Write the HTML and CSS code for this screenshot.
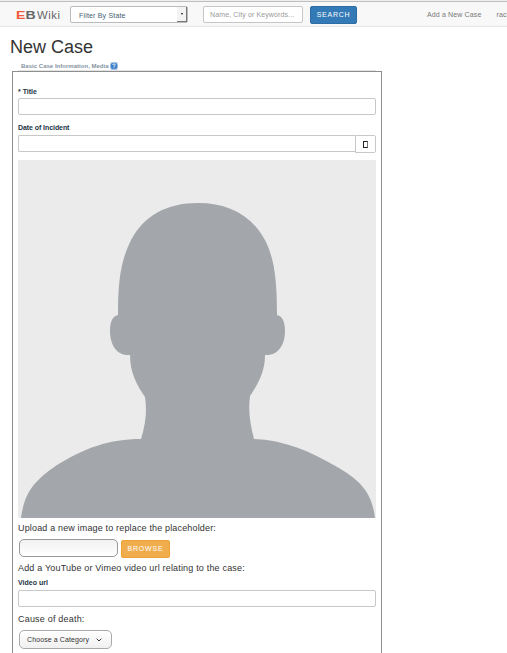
FILE: index.html
```html
<!DOCTYPE html>
<html lang="en">
<head>
<meta charset="utf-8">
<title>New Case - EBWiki</title>
<link rel="stylesheet" href="styles.css">
</head>
<body>
<nav class="navbar">
  <a class="brand"><b><span class="brand-e">E</span>B</b><span class="brand-wiki">Wiki</span></a>
  <div class="state-select"><span class="t-state">Filter By State</span><span class="select-arrow"></span></div>
  <div class="search-input"><span class="t-search">Name, City or Keywords...</span></div>
  <a class="btn btn-primary">SEARCH</a>
  <a class="nav-link">Add a New Case</a>
  <a class="nav-link nav-user">rachel</a>
</nav>
<main>
  <h1>New Case</h1>
  <div class="legend"><span class="t-legend">Basic Case Information, Media</span>
    <svg class="help" viewBox="0 0 8 8"><rect width="8" height="8" rx="2" fill="#b5cce4"/><circle cx="4" cy="4" r="3.3" fill="#3d80cb"/><path d="M2.7 3C2.8 1.5 5.3 1.6 5.2 3C5.1 3.8 4 3.7 4 4.8M4 5.5V6.3" fill="none" stroke="#fff" stroke-width="1"/></svg>
  </div>
  <form class="panel">
    <label class="label-title">* Title</label>
    <div class="field"></div>
    <label class="label-date">Date of Incident</label>
    <div class="date-group"><div class="field"></div><div class="date-button"><span class="glyph"></span></div></div>
    <svg class="avatar" viewBox="0 0 358 358">
      <rect width="358" height="358" fill="#ebebeb"/>
      <path d="M180 43C211 43 235 56 248 82C257 101 259 123 259 155C265 156 267 163 267 171C267 185 260 196 247 195C247 212 240 224 232 236C230 250 232 264 236 279C266 280 292 291 321 308C346 323 354 335 357 358H3C6 337 12 323 39 305C67 288 91 279 123 279C128 263 129 250 127 237C119 225 112 213 112 195C98 196 92 184 92 171C92 163 94 156 100 155C100 124 102 102 113 80C126 56 148 43 180 43Z" fill="#a3a6ab"/>
    </svg>
    <p class="copy copy-upload">Upload a new image to replace the placeholder:</p>
    <div class="upload-row"><div class="file-field"></div><a class="btn btn-warning">BROWSE</a></div>
    <p class="copy copy-video">Add a YouTube or Vimeo video url relating to the case:</p>
    <label class="label-video">Video url</label>
    <div class="field"></div>
    <p class="copy copy-cause">Cause of death:</p>
    <div class="category"><span class="t-cat">Choose a Category</span>
      <svg class="chevron" viewBox="0 0 6 4"><path d="M.7.7L3 3L5.3.7" fill="none" stroke="#333" stroke-width="1"/></svg>
    </div>
  </form>
</main>
</body>
</html>
```
FILE: styles.css
```css
* { box-sizing: border-box; }
html, body { height: 100%; overflow: hidden; }
body { margin: 0; background: #fff; color: #333; font-family: "Liberation Sans", Arial, sans-serif; font-size: 7px; }
span, label, a, p { white-space: nowrap; }
.navbar { display: flex; align-items: flex-start; height: 27px; padding: 4px 0 0 16px; margin: 0; background: linear-gradient(#eee 1px, #bebebe 1px, #bebebe 2px, #f8f8f8 2px); border-bottom: 1px solid #e4e4e4; overflow: hidden; }
.navbar > * { flex-shrink: 0; }
.brand { display: flex; align-items: baseline; width: 54px; font-size: 10px; line-height: 23px; color: #666; }
.brand b { width: 21px; font-size: 11px; transform: scaleX(1.28); transform-origin: left; }
.brand-e { color: #f4573a; }
.brand-wiki { letter-spacing: .5px; transform: scaleX(1.13); transform-origin: left; }
.state-select { display: flex; justify-content: space-between; width: 118px; height: 17px; margin-top: 2px; border: 1px solid #bbb; border-radius: 2px; background: #fff; padding-left: 8px; line-height: 17px; color: #456070; }
.t-state { letter-spacing: .18px; }
.select-arrow { width: 10px; background: #f3f3f3; border-right: 1px solid #777; border-bottom: 1px solid #777; display: flex; align-items: center; justify-content: center; }
.select-arrow::after { content: ""; border: 1.5px solid transparent; border-top: 2px solid #111; border-bottom: 0; }
.search-input { width: 100px; height: 17px; margin: 2px 7px 0 15px; padding-left: 6px; border: 1px solid #c6c6c6; border-radius: 2px; background: #fff; color: #999; line-height: 16px; }
.t-search { letter-spacing: .12px; }
.btn { border: 1px solid; border-radius: 2px; color: #fff; text-align: center; }
.btn-primary { width: 47px; height: 18px; margin-top: 2px; background: #337ab7; border-color: #2e6da4; line-height: 16px; letter-spacing: .75px; }
.nav-link { margin: 2px 0 0 70px; line-height: 17px; color: #777; letter-spacing: .14px; }
.nav-user { margin-left: 15px; }
h1 { margin: 9px 0 0 10px; height: 22px; font-size: 18px; line-height: 22px; font-weight: 400; }
.legend { display: flex; align-items: center; height: 13px; width: 358px; margin-left: 18px; padding: 4px 0 0 3px; border-bottom: 1px solid #e3e3e3; color: #8694a2; font-size: 6px; font-weight: 700; line-height: 8px; }
.t-legend { letter-spacing: .02px; }
.help { width: 8px; height: 8px; margin-left: 1px; }
.panel { display: flex; flex-direction: column; width: 370px; height: 600px; margin: 0 0 0 12px; padding: 15px 5px 0; border: 1px solid #8e8e8e; }
label { height: 11px; line-height: 10px; font-size: 7px; font-weight: 700; color: #234; }
.field { height: 17px; border: 1px solid #c8c8c8; border-radius: 2px; background: #fff; }
.label-date { margin: 8px 0 1px; letter-spacing: -.07px; }
.date-group { display: flex; height: 18px; }
.date-group .field { flex: 1; border-right: 0; border-radius: 2px 0 0 2px; }
.date-button { width: 21px; height: 18px; border: 1px solid #c8c8c8; border-radius: 0 2px 2px 0; display: flex; align-items: center; justify-content: center; }
.glyph { width: 5px; height: 7px; margin-right: 1px; border: 1px solid #222; border-right-color: #777; }
.avatar { flex: none; width: 358px; height: 358px; margin-top: 7px; }
.copy { margin: 0; font-size: 9px; line-height: 12px; height: 12px; color: #333; letter-spacing: .16px; }
.copy-upload { margin-top: 4px; }
.upload-row { display: flex; height: 19px; margin-top: 5px; padding-left: 1px; gap: 3px; }
.file-field { width: 99px; height: 18px; border: 1px solid #999; border-radius: 5px; background: linear-gradient(#f1f1f1, #fff); }
.btn-warning { width: 49px; height: 18px; margin-top: 1px; background: #f0ad4e; border-color: #eea236; line-height: 16px; letter-spacing: .8px; }
.copy-video { margin-top: 4px; letter-spacing: .18px; }
.label-video { margin: 4px 0 1px; }
.copy-cause { margin-top: 6px; letter-spacing: .2px; }
.category { display: flex; align-items: center; width: 93px; height: 19px; margin: 5px 0 0 1px; padding: 0 9px 0 7px; border: 1px solid #aaa; border-radius: 5px; background: linear-gradient(#fff, #f0f0f0); justify-content: space-between; }
.t-cat { letter-spacing: .1px; }
.chevron { width: 6px; height: 4px; }
```
